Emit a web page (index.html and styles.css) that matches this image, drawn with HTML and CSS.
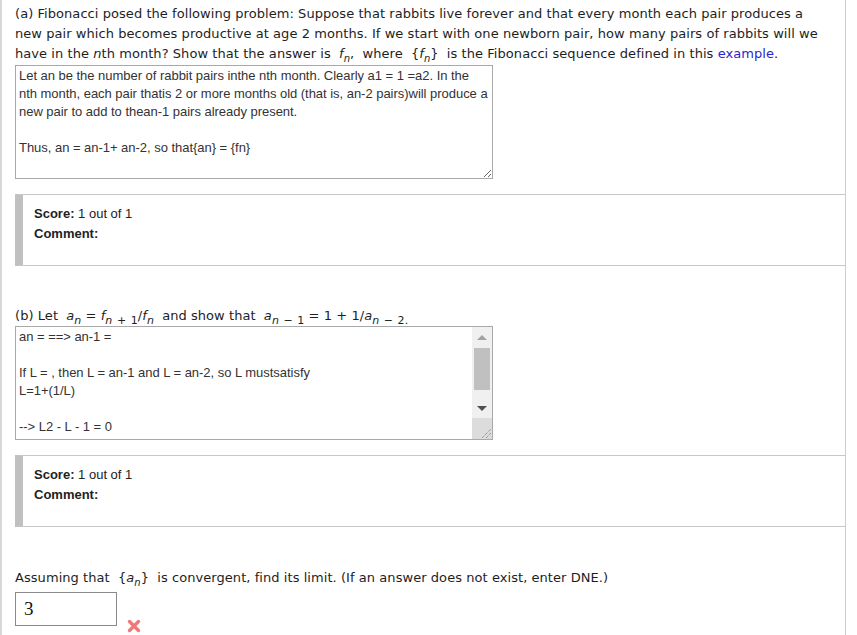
FILE: index.html
```html
<!DOCTYPE html>
<html>
<head>
<meta charset="utf-8">
<link rel="stylesheet" href="styles.css">
</head>
<body>
<div class="page">
  <p class="q">(a) Fibonacci posed the following problem: Suppose that rabbits live forever and that every month each pair produces a new pair which becomes productive at age 2 months. If we start with one newborn pair, how many pairs of rabbits will we have in the <i>n</i>th month? Show that the answer is <span class="m"><i>f</i><sub><i>n</i></sub>,</span> where <span class="m">{<i>f</i><sub><i>n</i></sub>}</span> is the Fibonacci sequence defined in this <a href="#" class="link">example</a>.</p>
  <textarea class="ans first" readonly>Let an be the number of rabbit pairs inthe nth month. Clearly a1 = 1 =a2. In the
nth month, each pair thatis 2 or more months old (that is, an-2 pairs)will produce a
new pair to add to thean-1 pairs already present.

Thus, an = an-1+ an-2, so that{an} = {fn}</textarea>
  <div class="score">
    <div><b>Score:</b> 1 out of 1</div>
    <div><b>Comment:</b></div>
  </div>

  <p class="q q2">(b) Let <span class="m"><i>a</i><sub><i>n</i></sub> = <i>f</i><sub><i>n</i> + 1</sub>/<i>f</i><sub><i>n</i></sub></span> and show that <span class="m"><i>a</i><sub><i>n</i> − 1</sub> = 1 + 1/<i>a</i><sub><i>n</i> − 2</sub><sub>.</sub></span></p>
  <div class="tawrap">
    <textarea class="ans noscroll" readonly>an = ==&gt; an-1 =

If L = , then L = an-1 and L = an-2, so L mustsatisfy
L=1+(1/L)

--&gt; L2 - L - 1 = 0

So L = (1 + sqrt5)/2</textarea>
    <div class="sbar">
      <div class="arr up"></div>
      <div class="thumb"></div>
      <div class="arr down"></div>
      <div class="corner">
        <svg width="12" height="12" viewBox="0 0 12 12"><path d="M2 11 L11 2 M6 11 L11 6" stroke="#777" stroke-width="1" stroke-dasharray="1 1" fill="none"/></svg>
      </div>
    </div>
  </div>
  <div class="score">
    <div><b>Score:</b> 1 out of 1</div>
    <div><b>Comment:</b></div>
  </div>

  <p class="q q3">Assuming that <span class="m">{<i>a</i><sub><i>n</i></sub>}</span> is convergent, find its limit. (If an answer does not exist, enter DNE.)</p>
  <div class="answer-row">
    <input class="num" type="text" value="3" readonly>
    <svg class="wrong" width="14" height="14" viewBox="0 0 14 14"><path d="M2.5 2.5 L11.5 11.5 M11.5 2.5 L2.5 11.5" stroke="#f07878" stroke-width="3.4" stroke-linecap="round"/></svg>
  </div>
</div>
</body>
</html>
```
FILE: styles.css
```css
html, body {
  margin: 0;
  padding: 0;
  background: #fff;
}
.page {
  box-sizing: border-box;
  width: 846px;
  min-height: 640px;
  border-left: 2px solid #d8d8d8;
  border-right: 1px solid #cccccc;
  padding: 4px 0 0 13px;
  font-family: "DejaVu Sans", Verdana, sans-serif;
  font-size: 13px;
  letter-spacing: 0.06px;
  color: #1e1e1e;
}
.q {
  margin: 0;
  line-height: 20px;
  padding-right: 20px;
}
.m {
  margin: 0 4px;
  white-space: nowrap;
}
.q2 .m {
  margin: 0 4px;
}
.m i {
  font-style: italic;
}
sub {
  font-size: 10px;
  line-height: 0;
  vertical-align: -4px;
}
.q2 sub {
  font-size: 11px;
  word-spacing: 1px;
}
.link {
  color: #2a1fd0;
  text-decoration: none;
}
.ans {
  display: block;
  box-sizing: border-box;
  width: 478px;
  height: 114px;
  margin: 0;
  padding: 1px 1px 1px 3px;
  border: 1px solid #a9a9a9;
  font-family: "Liberation Sans", Arial, sans-serif;
  font-size: 13px;
  line-height: 18px;
  color: #333;
  letter-spacing: -0.03px;
  background: #fff;
}
.ans.first {
  margin-top: 1px;
  white-space: pre;
  overflow: hidden;
}
.score {
  margin-top: 15px;
  border-top: 1px solid #c8c8c8;
  border-bottom: 1px solid #c8c8c8;
  border-left: 8px solid #c0c0c0;
  padding: 9px 0 21px 11px;
  height: 40px;
  font-family: "Liberation Sans", Arial, sans-serif;
  font-size: 13px;
  letter-spacing: 0;
  line-height: 20px;
  color: #222;
}
.q2 {
  margin-top: 40px;
}
.tawrap {
  position: relative;
  width: 478px;
}
.noscroll {
  overflow: hidden;
  resize: none;
}
.sbar {
  position: absolute;
  top: 1px;
  right: 1px;
  bottom: 1px;
  width: 20px;
  background: #f0f0f0;
  display: flex;
  flex-direction: column;
}
.arr {
  height: 20px;
  display: flex;
  align-items: center;
  justify-content: center;
}
.arr.up::before {
  content: "";
  border-left: 5px solid transparent;
  border-right: 5px solid transparent;
  border-bottom: 5px solid #a3a3a3;
}
.arr.down::before {
  content: "";
  border-left: 5px solid transparent;
  border-right: 5px solid transparent;
  border-top: 5px solid #505050;
}
.thumb {
  margin: 1px 2px 0 2px;
  height: 42px;
  background: #c0c0c0;
}
.arr.down {
  margin-top: auto;
}
.corner {
  height: 21px;
  background: #dcdcdc;
  display: flex;
  align-items: flex-end;
  justify-content: flex-end;
}
.q3 {
  margin-top: 41px;
}
.answer-row {
  display: flex;
  align-items: flex-start;
  margin-top: 4px;
}
.num {
  box-sizing: border-box;
  width: 102px;
  height: 34px;
  margin: 0;
  border: 1px solid #8a8a8a;
  padding: 0 8px;
  font-family: "Liberation Serif", "Times New Roman", serif;
  font-size: 19px;
  color: #111;
  outline: none;
}
.wrong {
  margin: 27px 0 0 10px;
}
```
